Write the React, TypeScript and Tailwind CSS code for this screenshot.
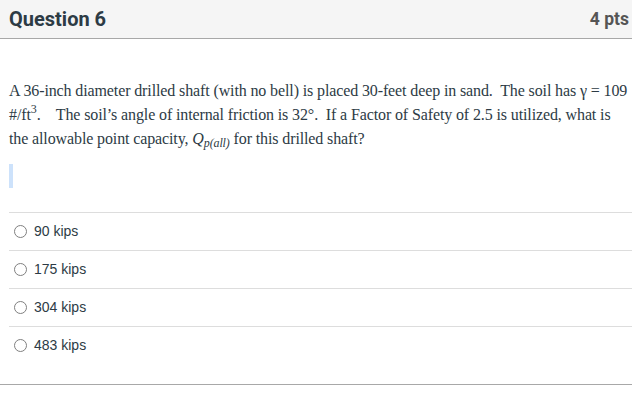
export default function App() {
  const answers = ["90 kips", "175 kips", "304 kips", "483 kips"];

  return (
    <div className="w-[632px] h-[416px] bg-white overflow-hidden">
      {/* Header */}
      <div className="h-[39px] flex items-center justify-between pl-[9px] pr-[3px] bg-[#f5f5f5] border-b border-[#a8a8a8]">
        <span className="font-['Roboto',sans-serif] font-bold text-[20px] text-[#2d3b45]">Question 6</span>
        <span className="font-['Roboto',sans-serif] font-bold text-[17.5px] text-[#555]">4 pts</span>
      </div>

      {/* Body */}
      <div className="pl-[9px] pt-[40px]">
        <p className="whitespace-nowrap font-['Liberation_Serif',serif] text-[16px] leading-[24px] tracking-[-0.12px] text-[#2d3b45]">
          A 36-inch diameter drilled shaft (with no bell) is placed 30-feet deep in sand.&nbsp; The soil has γ = 109
          <br />
          #/ft<sup className="text-[12px] -top-[0.6em]">3</sup>.&nbsp;&nbsp;&nbsp; The soil’s angle of internal friction is 32°.&nbsp; If a
          Factor of Safety of 2.5 is utilized, what is
          <br />
          the allowable point capacity,{" "}
          <i>
            Q<sub className="text-[12px]">p(all)</sub>
          </i>{" "}
          for this drilled shaft?
        </p>
        <div className="mt-[13px] w-[4px] h-[24px] bg-[#cde2fb]" />

        {/* Answers */}
        <div className="mt-[24px]">
          {answers.map((a) => (
            <div key={a} className="h-[38px] border-t border-[#dddddd] flex items-center pl-[5px]">
              <span className="w-[13px] h-[13px] rounded-full border border-[#808080] bg-white" />
              <span className="ml-[7px] font-['Liberation_Sans',sans-serif] text-[14px] text-[#2d3b45]">{a}</span>
            </div>
          ))}
        </div>
      </div>
      <div className="mt-[20px] border-t border-[#a8a8a8]" />
    </div>
  );
}
